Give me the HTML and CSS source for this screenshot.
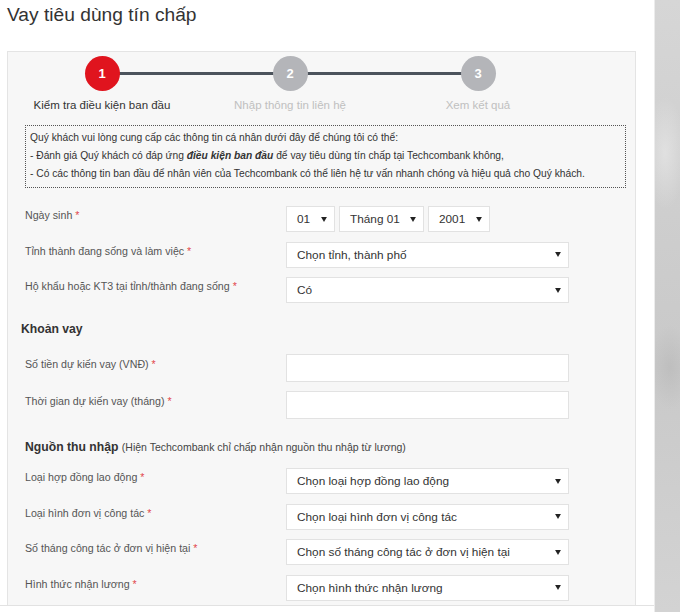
FILE: index.html
```html
<!DOCTYPE html>
<html lang="vi">
<head>
<meta charset="utf-8">
<title>Vay tiêu dùng tín chấp</title>
<link rel="stylesheet" href="styles.css">
</head>
<body>
<div class="page">
  <main class="main">
    <h1 class="title">Vay tiêu dùng tín chấp</h1>
    <section class="panel">
      <div class="stepper">
        <div class="step active"><span class="dot">1</span><span class="step-label">Kiểm tra điều kiện ban đầu</span></div>
        <div class="step"><span class="dot">2</span><span class="step-label">Nhập thông tin liên hệ</span></div>
        <div class="step"><span class="dot">3</span><span class="step-label">Xem kết quả</span></div>
      </div>

      <div class="note">
        <p>Quý khách vui lòng cung cấp các thông tin cá nhân dưới đây để chúng tôi có thể:</p>
        <p>- Đánh giá Quý khách có đáp ứng <b><i>điều kiện ban đầu</i></b> để vay tiêu dùng tín chấp tại Techcombank không,</p>
        <p>- Có các thông tin ban đầu để nhân viên của Techcombank có thể liên hệ tư vấn nhanh chóng và hiệu quả cho Quý khách.</p>
      </div>

      <div class="form first">
        <div class="row">
          <label class="label">Ngày sinh <span class="req">*</span></label>
          <div class="controls">
            <div class="select s-day"><span>01</span><svg class="arrow" viewBox="0 0 7 6"><path d="M0 0H7L3.5 6Z"/></svg></div>
            <div class="select s-month"><span>Tháng 01</span><svg class="arrow" viewBox="0 0 7 6"><path d="M0 0H7L3.5 6Z"/></svg></div>
            <div class="select s-year"><span>2001</span><svg class="arrow" viewBox="0 0 7 6"><path d="M0 0H7L3.5 6Z"/></svg></div>
          </div>
        </div>
        <div class="row">
          <label class="label">Tỉnh thành đang sống và làm việc <span class="req">*</span></label>
          <div class="select wide"><span>Chọn tỉnh, thành phố</span><svg class="arrow" viewBox="0 0 7 6"><path d="M0 0H7L3.5 6Z"/></svg></div>
        </div>
        <div class="row">
          <label class="label">Hộ khẩu hoặc KT3 tại tỉnh/thành đang sống <span class="req">*</span></label>
          <div class="select wide"><span>Có</span><svg class="arrow" viewBox="0 0 7 6"><path d="M0 0H7L3.5 6Z"/></svg></div>
        </div>
      </div>

      <h2 class="heading h-loan">Khoản vay</h2>
      <div class="form loan">
        <div class="row row-input">
          <label class="label">Số tiền dự kiến vay (VNĐ) <span class="req">*</span></label>
          <div class="input"></div>
        </div>
        <div class="row row-input">
          <label class="label">Thời gian dự kiến vay (tháng) <span class="req">*</span></label>
          <div class="input"></div>
        </div>
      </div>

      <h2 class="heading h-income">Nguồn thu nhập <span class="sub">(Hiện Techcombank chỉ chấp nhận nguồn thu nhập từ lương)</span></h2>
      <div class="form income">
        <div class="row">
          <label class="label">Loại hợp đồng lao động <span class="req">*</span></label>
          <div class="select wide"><span>Chọn loại hợp đồng lao động</span><svg class="arrow" viewBox="0 0 7 6"><path d="M0 0H7L3.5 6Z"/></svg></div>
        </div>
        <div class="row">
          <label class="label">Loại hình đơn vị công tác <span class="req">*</span></label>
          <div class="select wide"><span>Chọn loại hình đơn vị công tác</span><svg class="arrow" viewBox="0 0 7 6"><path d="M0 0H7L3.5 6Z"/></svg></div>
        </div>
        <div class="row">
          <label class="label">Số tháng công tác ở đơn vị hiện tại <span class="req">*</span></label>
          <div class="select wide"><span>Chọn số tháng công tác ở đơn vị hiện tại</span><svg class="arrow" viewBox="0 0 7 6"><path d="M0 0H7L3.5 6Z"/></svg></div>
        </div>
        <div class="row">
          <label class="label">Hình thức nhận lương <span class="req">*</span></label>
          <div class="select wide"><span>Chọn hình thức nhận lương</span><svg class="arrow" viewBox="0 0 7 6"><path d="M0 0H7L3.5 6Z"/></svg></div>
        </div>
      </div>
    </section>
  </main>
  <aside class="side"></aside>
</div>
</body>
</html>
```

FILE: styles.css
```css
* { box-sizing: border-box; }
html, body { margin: 0; padding: 0; }
body {
  font-family: "Liberation Sans", Arial, sans-serif;
  color: #333;
  background: #fff;
  width: 680px;
  height: 612px;
  overflow: hidden;
}
.page {
  display: flex;
  height: 612px;
}
.main {
  width: 654px;
  height: 606px;
  padding-left: 7px;
  padding-right: 18px;
  border-bottom: 1px solid #e2e2e2;
  overflow: hidden;
}
.side {
  flex: 1;
  background:
    radial-gradient(ellipse 30px 60px at 60% 60%, rgba(170,170,170,0.35), rgba(170,170,170,0) 70%),
    radial-gradient(ellipse 30px 80px at 40% 25%, rgba(235,235,235,0.6), rgba(235,235,235,0) 70%),
    linear-gradient(to bottom, #d6d6d6 0%, #cfcfcf 30%, #c9c9c9 60%, #d3d3d3 100%);
  border-left: 1px solid #ececec;
}
.title {
  margin: 0;
  padding-top: 3px;
  height: 51px;
  font-size: 19.2px;
  font-weight: normal;
  line-height: 24px;
  color: #333;
}
.panel {
  background: #f7f7f7;
  border: 1px solid #e4e4e4;
  border-bottom: none;
  height: 555px;
  padding: 0 9px 0 17px;
}
.stepper {
  position: relative;
  display: grid;
  grid-template-columns: repeat(3, 188px);
  margin-left: -17px;
  padding-top: 4px;
}
.stepper::before {
  content: "";
  position: absolute;
  left: 94px;
  width: 376px;
  top: 20px;
  height: 3px;
  background: #4c535c;
}
.step {
  display: flex;
  flex-direction: column;
  align-items: center;
  position: relative;
}
.dot {
  width: 35px;
  height: 35px;
  border-radius: 50%;
  background: #b4b5b9;
  color: #fff;
  font-weight: bold;
  font-size: 13px;
  display: flex;
  align-items: center;
  justify-content: center;
}
.step.active .dot { background: #e0141e; }
.step-label {
  margin-top: 6px;
  font-size: 11.5px;
  line-height: 16px;
  color: #c0c0c0;
  white-space: nowrap;
}
.step.active .step-label { color: #333; }

.note {
  margin-top: 12px;
  border: 1px dotted #555;
  padding: 3px 4px 4px 4px;
  font-size: 10.25px;
  line-height: 18px;
  color: #333;
  white-space: nowrap;
}
.note p { margin: 0; }

.form { display: flex; flex-direction: column; gap: 9.5px; }
.form.first { margin-top: 18px; }
.row {
  display: grid;
  grid-template-columns: 261px 283px;
  align-items: start;
}
.label {
  font-size: 10.65px;
  line-height: 16px;
  color: #555;
  padding-top: 1px;
}
.req { color: #e2474b; }
.controls { display: flex; gap: 4px; }
.select {
  height: 26px;
  background: #fff;
  border: 1px solid #e2e2e2;
  display: flex;
  align-items: center;
  justify-content: space-between;
  padding: 0 7px 0 10px;
  font-size: 11.8px;
  color: #333;
  white-space: nowrap;
}
.s-day { width: 49px; }
.s-month { width: 85px; }
.s-year { width: 62px; }
.arrow { width: 6px; height: 5px; fill: #222; flex: none; }
.heading {
  margin: 0;
  font-size: 12.2px;
  line-height: 16px;
  font-weight: bold;
  color: #333;
  white-space: nowrap;
}
.h-loan { margin-top: 18px; margin-left: -4px; }
.form.loan { margin-top: 17px; gap: 9px; }
.row-input .label { padding-top: 2px; }
.input {
  height: 28px;
  background: #fff;
  border: 1px solid #e2e2e2;
}
.h-income { margin-top: 20px; }
.sub { font-weight: normal; font-size: 10.5px; color: #444; }
.form.income { margin-top: 13px; }
```
